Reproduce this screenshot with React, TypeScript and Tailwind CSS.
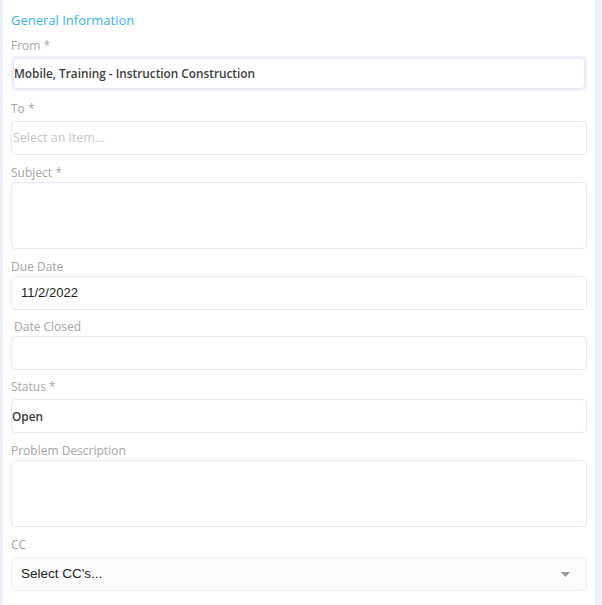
import React from 'react';

const labelCls = 'block text-[12px] leading-[16px] text-[#a6a6a6] font-["Open_Sans",sans-serif]';
const boxCls = 'w-full rounded-[4px] border border-[#e7eafa] bg-white';
const valueCls = 'pt-[1px] text-[11.8px] font-semibold text-[#3c3c3c] font-["Open_Sans",sans-serif]';

function Field({
  label,
  top,
  gap,
  height,
  indent,
  children,
}: {
  label: string;
  top: string;
  gap: string;
  height: string;
  indent?: boolean;
  children?: React.ReactNode;
}) {
  return (
    <div className={top}>
      <label className={`${labelCls} ${indent ? 'pl-[3px]' : ''}`}>{label}</label>
      <div className={`${gap} ${height} ${boxCls} flex items-center`}>{children}</div>
    </div>
  );
}

export default function App() {
  return (
    <div className="flex h-[605px] w-full bg-[#eef1fc]">
      <div className="ml-[3px] w-[592px] bg-white px-[8px] pt-[11px]">
        <h2 className='text-[13px] leading-[18px] text-[#3bb4e5] font-["Open_Sans",sans-serif]'>
          General Information
        </h2>

        {/* From */}
        <div className="mt-[9px]">
          <label className={labelCls}>From *</label>
          <div className="mt-[2px] h-[35px] w-full rounded-[5px] border-2 border-[#eef1fc] bg-white">
            <div className="flex h-full items-center rounded-[4px] border border-[#e4e8f8]">
              <span className={valueCls}>Mobile, Training - Instruction Construction</span>
            </div>
          </div>
        </div>

        <Field label="To *" top="mt-[10px]" gap="mt-[4px]" height="h-[34px]">
          <span className='pl-[1px] text-[12.5px] text-[#c6c6c6] font-["Open_Sans",sans-serif]'>
            Select an item...
          </span>
        </Field>

        <Field label="Subject *" top="mt-[10px]" gap="mt-[1px]" height="h-[67px]" />

        <Field label="Due Date" top="mt-[10px]" gap="mt-[1px]" height="h-[34px]">
          <span className='pl-[9px] text-[13px] text-[#222] font-["Liberation_Sans",Arial,sans-serif]'>
            11/2/2022
          </span>
        </Field>

        <Field label="Date Closed" indent top="mt-[9px]" gap="mt-[1px]" height="h-[34px]" />

        <Field label="Status *" top="mt-[9px]" gap="mt-[4px]" height="h-[34px]">
          <span className={valueCls}>Open</span>
        </Field>

        <Field label="Problem Description" top="mt-[10px]" gap="mt-[1px]" height="h-[67px]" />

        {/* CC */}
        <div className="mt-[10px]">
          <label className={labelCls}>CC</label>
          <div className="mt-[4px] flex h-[34px] w-full items-center justify-between rounded-[4px] border border-[#eef0f6] bg-[#fcfcfc] pl-[9px] pr-[16px]">
            <span className='text-[13.5px] text-[#222] font-["Liberation_Sans",Arial,sans-serif]'>
              Select CC's...
            </span>
            <svg width="9" height="5" viewBox="0 0 9 5">
              <path d="M0 0h9L4.5 5z" fill="#9a9a9a" />
            </svg>
          </div>
        </div>
      </div>
    </div>
  );
}
